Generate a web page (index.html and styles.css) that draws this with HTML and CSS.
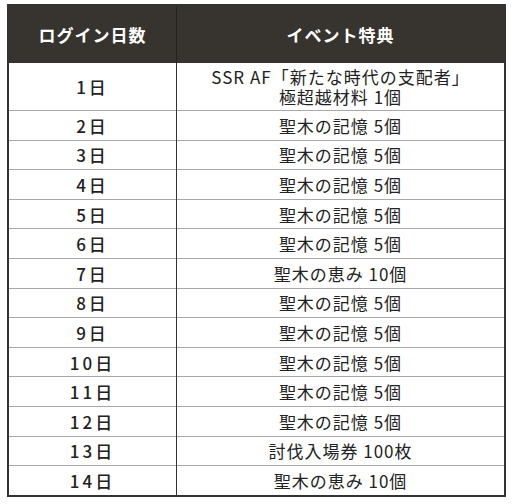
FILE: index.html
```html
<!DOCTYPE html>
<html lang="ja">
<head>
<meta charset="utf-8">
<link rel="stylesheet" href="styles.css">
</head>
<body>
<table class="bonus">
  <thead>
    <tr><th class="day">ログイン日数</th><th class="gift">イベント特典</th></tr>
  </thead>
  <tbody>
    <tr class="tall"><td>1日</td><td><span class="line">SSR AF「新たな時代の支配者」</span><span class="line">極超越材料 1個</span></td></tr>
    <tr><td>2日</td><td>聖木の記憶 5個</td></tr>
    <tr><td>3日</td><td>聖木の記憶 5個</td></tr>
    <tr><td>4日</td><td>聖木の記憶 5個</td></tr>
    <tr><td>5日</td><td>聖木の記憶 5個</td></tr>
    <tr><td>6日</td><td>聖木の記憶 5個</td></tr>
    <tr><td>7日</td><td>聖木の恵み 10個</td></tr>
    <tr><td>8日</td><td>聖木の記憶 5個</td></tr>
    <tr><td>9日</td><td>聖木の記憶 5個</td></tr>
    <tr><td>10日</td><td>聖木の記憶 5個</td></tr>
    <tr><td>11日</td><td>聖木の記憶 5個</td></tr>
    <tr><td>12日</td><td>聖木の記憶 5個</td></tr>
    <tr><td>13日</td><td>討伐入場券 100枚</td></tr>
    <tr><td>14日</td><td>聖木の恵み 10個</td></tr>
  </tbody>
</table>
</body>
</html>
```
FILE: styles.css
```css
html, body {
  margin: 0;
  padding: 0;
  background: #ffffff;
}
body {
  padding: 4px 6px 0 7px;
  font-family: "Noto Sans CJK JP", "Noto Sans", sans-serif;
  color: #222222;
}
.bonus {
  width: 499px;
  border-collapse: collapse;
  border: 2px solid #333333;
  table-layout: fixed;
}
.bonus th {
  background: #37332f;
  color: #ffffff;
  font-weight: 700;
  font-size: 17px;
  letter-spacing: 1px;
  height: 57px;
  padding: 0;
  text-align: center;
  vertical-align: middle;
}
.bonus th.day {
  width: 167px;
  border-right: 1px solid #222222;
}
.bonus td {
  font-size: 17px;
  letter-spacing: 1px;
  line-height: 21px;
  text-align: center;
  vertical-align: middle;
  height: 28.6px;
  padding: 0;
  border-top: 1px solid #a8a8a8;
}
.bonus td:first-child {
  border-right: 1px solid #333333;
  font-weight: 500;
  letter-spacing: 3px;
}
.bonus tr.tall td {
  height: 47px;
  border-top: none;
}
.line {
  display: block;
  line-height: 20px;
}
```
